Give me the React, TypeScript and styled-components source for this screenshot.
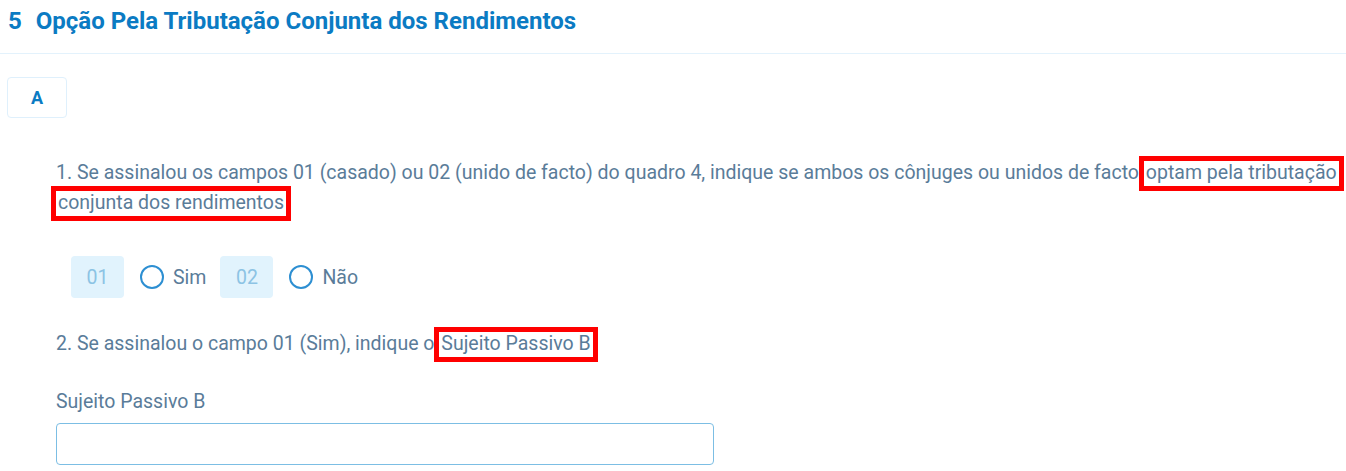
import React from "react";
import styled, { createGlobalStyle } from "styled-components";

const Global = createGlobalStyle`
  html, body { margin: 0; padding: 0; background: #fff; }
  body { font-family: Roboto, "Liberation Sans", Arial, sans-serif; }
  * { box-sizing: border-box; }
`;

const Page = styled.div`
  width: 1346px;
  height: 471px;
  overflow: hidden;
`;

const Header = styled.div`
  height: 54px;
  border-bottom: 1px solid #e3f2fc;
  display: flex;
  align-items: flex-start;
  padding: 7px 8px 0 8px;
`;

const Title = styled.h2`
  margin: 0;
  font-size: 24px;
  line-height: 28px;
  font-weight: 700;
  color: #0b7bc3;
  display: flex;
  gap: 14px;
`;

const Body = styled.div`
  padding: 23px 0 0 7px;
`;

const Tabs = styled.div`
  display: flex;
`;

const Tab = styled.div`
  width: 60px;
  height: 41px;
  border: 1px solid #dff0fc;
  border-radius: 4px;
  display: flex;
  align-items: center;
  justify-content: center;
  font-size: 18px;
  font-weight: 700;
  color: #0b7bc3;
`;

const Section = styled.div`
  padding: 40px 0 0 49px;
  color: #5a7c99;
  font-size: 19.5px;
`;

const Question = styled.p`
  margin: 0;
  line-height: 30px;
  padding-right: 4px;
`;

const Mark = styled.span`
  outline: 5px solid #ff0000;
  padding: 0 2px 2px 2px;
`;

const OptionRow = styled.div`
  display: flex;
  align-items: center;
  margin: 38px 0 31px 15px;
  height: 42px;
`;

const Code = styled.span`
  width: 53px;
  height: 42px;
  border-radius: 4px;
  background: #e1f3fd;
  color: #8cc3e4;
  display: flex;
  align-items: center;
  justify-content: center;
  font-size: 19.5px;
  margin-right: 16px;
`;

const RadioLabel = styled.label`
  display: flex;
  align-items: center;
  gap: 9px;
  margin-right: 14px;
  color: #5a7c99;
  font-size: 19.5px;
`;

const Radio = styled.span`
  width: 24px;
  height: 24px;
  border-radius: 50%;
  border: 2px solid #2d8fd2;
  display: inline-block;
`;

const FieldLabel = styled.div`
  margin-top: 28px;
  line-height: 30px;
`;

const Input = styled.input`
  display: block;
  margin-top: 6px;
  width: 658px;
  height: 42px;
  border: 1px solid #7cbee4;
  border-radius: 4px;
  font: inherit;
  outline: none;
`;

export default function App() {
  return (
    <Page>
      <Global />
      <Header>
        <Title>
          <span>5</span>
          <span>Opção Pela Tributação Conjunta dos Rendimentos</span>
        </Title>
      </Header>
      <Body>
        <Tabs>
          <Tab>A</Tab>
        </Tabs>
        <Section>
          <Question>
            1. Se assinalou os campos 01 (casado) ou 02 (unido de facto) do quadro 4, indique se ambos os cônjuges ou unidos de facto{" "}
            <Mark>optam pela tributação</Mark> <Mark>conjunta dos rendimentos</Mark>
          </Question>
          <OptionRow>
            <Code>01</Code>
            <RadioLabel>
              <Radio />
              Sim
            </RadioLabel>
            <Code>02</Code>
            <RadioLabel>
              <Radio />
              Não
            </RadioLabel>
          </OptionRow>
          <Question>
            2. Se assinalou o campo 01 (Sim), indique o <Mark>Sujeito Passivo B</Mark>
          </Question>
          <FieldLabel>Sujeito Passivo B</FieldLabel>
          <Input type="text" />
        </Section>
      </Body>
    </Page>
  );
}
